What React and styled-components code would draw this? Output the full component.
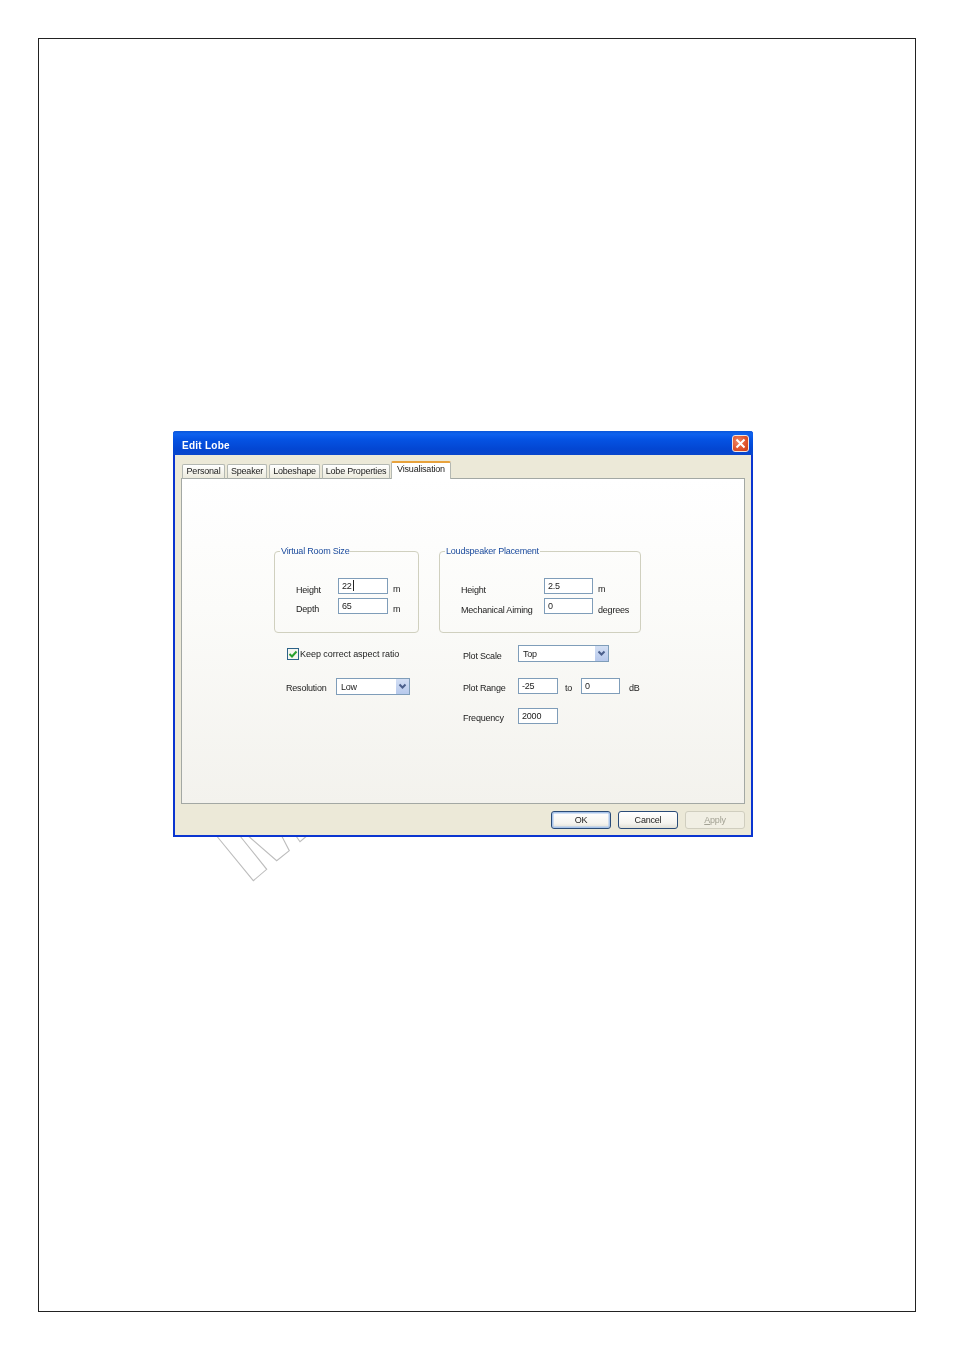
import React from "react";
import styled, { createGlobalStyle } from "styled-components";

const Global = createGlobalStyle`
  html, body { margin: 0; padding: 0; background: #fff; }
  body { font-family: "Liberation Sans", Arial, sans-serif; font-size: 9px; letter-spacing: -0.2px; color: #222; }
  * { box-sizing: border-box; }
`;

const Page = styled.div`
  width: 954px;
  height: 1351px;
  padding: 38px 38px 39px 38px;
`;
const Frame = styled.div`
  position: relative;
  width: 878px;
  height: 1274px;
  border: 1px solid #222;
  padding: 392px 0 0 134px;
`;
const Watermark = styled.svg`
  position: absolute;
  left: 131px;
  top: 751px;
  width: 150px;
  height: 100px;
  fill: none;
  stroke: #bdbdbd;
  stroke-width: 1.1;
`;
const Dialog = styled.div`
  position: relative;
  width: 580px;
  height: 406px;
  display: flex;
  flex-direction: column;
  background: #ece9d8;
  border: 2px solid #0a35d0;
  border-top: 0;
  border-radius: 3px 3px 0 0;
  filter: blur(0.3px);
`;
const TitleBar = styled.div`
  height: 24px;
  margin: 0 -2px;
  padding: 0 4px 0 9px;
  display: flex;
  align-items: center;
  justify-content: space-between;
  border-radius: 3px 3px 0 0;
  background: linear-gradient(180deg, #0a56d8 0%, #0f62ee 12%, #0553e3 35%, #0346d2 75%, #0a47cc 100%);
`;
const Title = styled.span`
  color: #fff;
  font-weight: 700;
  font-size: 10px;
  letter-spacing: 0.25px;
  padding-top: 5px;
`;
const Close = styled.div`
  width: 17px;
  height: 17px;
  margin-top: 1px;
  border: 1px solid #f4e4dc;
  border-radius: 3px;
  background: radial-gradient(circle at 35% 35%, #ee8a68 0%, #e0552e 55%, #c93c16 100%);
  display: flex;
  align-items: center;
  justify-content: center;
`;
const Body = styled.div`
  flex: 1;
  display: flex;
  flex-direction: column;
  padding: 6px;
`;
const Tabs = styled.div`
  height: 18px;
  display: flex;
  align-items: flex-end;
  gap: 2px;
  padding-left: 1px;
  position: relative;
  z-index: 1;
  margin-bottom: -1px;
`;
const Tab = styled.div`
  width: ${(p) => p.$w}px;
  height: ${(p) => (p.$active ? 18 : 15)}px;
  display: flex;
  justify-content: center;
  align-items: center;
  white-space: nowrap;
  border: 1px solid #b4b8b2;
  border-bottom: ${(p) => (p.$active ? "0" : "1px solid #a6aca9")};
  border-top: ${(p) => (p.$active ? "2px solid #e8a23c" : "1px solid #b4b8b2")};
  border-radius: 2px 2px 0 0;
  background: ${(p) => (p.$active ? "#fff" : "linear-gradient(180deg, #fff 0%, #f3f2ea 60%, #eceadd 100%)")};
  padding-bottom: ${(p) => (p.$active ? "4px" : "2px")};
  margin-left: ${(p) => (p.$active ? "-1px" : "0")};
`;
const Panel = styled.div`
  height: 326px;
  border: 1px solid #a3a8a4;
  background: linear-gradient(180deg, #ffffff 0%, #fbfbf9 40%, #f3f2ed 100%);
  padding: 67px 0 0 92px;
  display: grid;
  grid-template-columns: 145px 202px;
  column-gap: 20px;
  align-content: start;
`;
const Column = styled.div`
  display: flex;
  flex-direction: column;
`;
const Group = styled.fieldset`
  margin: 0;
  height: 87px;
  padding: 21px 0 0 0;
  border: 1px solid #d0d0bf;
  border-radius: 4px;
  display: block;
`;
const Legend = styled.legend`
  margin-left: 5px;
  padding: 0 1px;
  color: #1a4a9c;
  line-height: 11px;
`;
const FieldGrid = styled.div`
  display: grid;
  grid-template-columns: ${(p) => p.$label}px ${(p) => p.$field}px auto;
  grid-auto-rows: 16px;
  row-gap: 4px;
  align-items: center;
  padding-left: 21px;
`;
const RowLabel = styled.span`
  padding-top: ${(p) => p.$drop ?? 7}px;
  white-space: nowrap;
`;
const Unit = styled.span`
  padding: ${(p) => p.$drop ?? 5}px 0 0 5px;
  white-space: nowrap;
`;
const Input = styled.div`
  width: ${(p) => p.$w}px;
  height: 16px;
  background: #fff;
  border: 1px solid #7f9db9;
  padding: 0 3px 1px;
  display: flex;
  align-items: center;
  line-height: 12px;
`;
const Caret = styled.i`
  display: inline-block;
  width: 1px;
  height: 11px;
  margin-left: 1px;
  background: #222;
`;
const CheckRow = styled.div`
  display: flex;
  align-items: center;
  gap: 1px;
  margin: 15px 0 0 13px;
  white-space: nowrap;
  letter-spacing: -0.03px;
`;
const Checkbox = styled.div`
  width: 12px;
  height: 12px;
  background: #f6f6f0;
  border: 1px solid #2c6288;
  display: flex;
  align-items: center;
  justify-content: center;
`;
const FormRow = styled.div`
  display: flex;
  align-items: center;
  margin: ${(p) => p.$top}px 0 0 ${(p) => p.$left}px;
`;
const FormLabel = styled.span`
  width: ${(p) => p.$w}px;
  padding-top: ${(p) => p.$drop ?? 4}px;
  white-space: nowrap;
`;
const Select = styled.div`
  width: ${(p) => p.$w}px;
  height: 17px;
  background: #fff;
  border: 1px solid #7f9db9;
  padding-left: 4px;
  display: flex;
  align-items: center;
  justify-content: space-between;
`;
const Arrow = styled.div`
  width: 13px;
  height: 15px;
  background: linear-gradient(180deg, #d3dff4, #b7c9ec);
  display: flex;
  align-items: center;
  justify-content: center;
`;
const Inline = styled.span`
  width: ${(p) => p.$w}px;
  padding-left: ${(p) => p.$pad}px;
  padding-top: 4px;
`;
const Footer = styled.div`
  display: flex;
  justify-content: flex-end;
  gap: 7px;
  padding-top: 7px;
`;
const Btn = styled.div`
  width: 60px;
  height: 18px;
  display: flex;
  align-items: center;
  justify-content: center;
  border: 1px solid ${(p) => (p.$disabled ? "#d0cebf" : "#2a4c78")};
  border-radius: 3px;
  color: ${(p) => (p.$disabled ? "#a3a294" : "#222")};
  background: ${(p) => (p.$disabled ? "#f1efe4" : "linear-gradient(180deg, #fff 0%, #f5f4ef 70%, #e0dfd6 100%)")};
  box-shadow: ${(p) => (p.$default ? "inset 0 0 0 1.5px #a8c4ea" : "none")};
`;
const Mnemonic = styled.span`
  text-decoration: underline;
`;

const SelectArrow = () => (
  <Arrow>
    <svg width="9" height="7" viewBox="0 0 9 7">
      <path d="M1.5 1.5 L4.5 4.5 L7.5 1.5" fill="none" stroke="#4b5f8c" strokeWidth="2" />
    </svg>
  </Arrow>
);

export default function App() {
  return (
    <Page>
      <Global />
      <Frame>
        <Watermark viewBox="170 790 150 100">
          <path d="M216.7 836 L253.3 880.7 L266.7 869.3 L240 836" />
          <path d="M248.3 836 L276.7 860.7 L289.3 850.7 L281.7 836" />
          <path d="M296 836 L300 841.7 L306.7 836" />
        </Watermark>
        <Dialog>
          <TitleBar>
            <Title>Edit Lobe</Title>
            <Close>
              <svg width="11" height="11" viewBox="0 0 11 11">
                <path d="M1.5 1.5 L9.5 9.5 M9.5 1.5 L1.5 9.5" stroke="#fff" strokeWidth="2" />
              </svg>
            </Close>
          </TitleBar>
          <Body>
            <Tabs>
              <Tab $w={43}>Personal</Tab>
              <Tab $w={40}>Speaker</Tab>
              <Tab $w={51}>Lobeshape</Tab>
              <Tab $w={68}>Lobe Properties</Tab>
              <Tab $w={60} $active>Visualisation</Tab>
            </Tabs>
            <Panel>
              <Column>
                <Group>
                  <Legend>Virtual Room Size</Legend>
                  <FieldGrid $label={42} $field={50}>
                    <RowLabel>Height</RowLabel>
                    <Input $w={50}>22<Caret /></Input>
                    <Unit>m</Unit>
                    <RowLabel $drop={6}>Depth</RowLabel>
                    <Input $w={50}>65</Input>
                    <Unit $drop={6}>m</Unit>
                  </FieldGrid>
                </Group>
                <CheckRow>
                  <Checkbox>
                    <svg width="10" height="10" viewBox="0 0 10 10">
                      <path d="M1.5 5 L4 7.5 L8.5 2.5" fill="none" stroke="#2aa12e" strokeWidth="2" />
                    </svg>
                  </Checkbox>
                  Keep correct aspect ratio
                </CheckRow>
                <FormRow $top={18} $left={12}>
                  <FormLabel $w={50} $drop={2}>Resolution</FormLabel>
                  <Select $w={74}>Low<SelectArrow /></Select>
                </FormRow>
              </Column>
              <Column>
                <Group>
                  <Legend>Loudspeaker Placement</Legend>
                  <FieldGrid $label={83} $field={49}>
                    <RowLabel>Height</RowLabel>
                    <Input $w={49}>2.5</Input>
                    <Unit>m</Unit>
                    <RowLabel>Mechanical Aiming</RowLabel>
                    <Input $w={49}>0</Input>
                    <Unit $drop={7}>degrees</Unit>
                  </FieldGrid>
                </Group>
                <FormRow $top={12} $left={24}>
                  <FormLabel $w={55}>Plot Scale</FormLabel>
                  <Select $w={91}>Top<SelectArrow /></Select>
                </FormRow>
                <FormRow $top={16} $left={24}>
                  <FormLabel $w={55}>Plot Range</FormLabel>
                  <Input $w={40}>-25</Input>
                  <Inline $w={23} $pad={7}>to</Inline>
                  <Input $w={39}>0</Input>
                  <Inline $w={20} $pad={9}>dB</Inline>
                </FormRow>
                <FormRow $top={14} $left={24}>
                  <FormLabel $w={55}>Frequency</FormLabel>
                  <Input $w={40}>2000</Input>
                </FormRow>
              </Column>
            </Panel>
            <Footer>
              <Btn $default>OK</Btn>
              <Btn>Cancel</Btn>
              <Btn $disabled><span><Mnemonic>A</Mnemonic>pply</span></Btn>
            </Footer>
          </Body>
        </Dialog>
      </Frame>
    </Page>
  );
}
